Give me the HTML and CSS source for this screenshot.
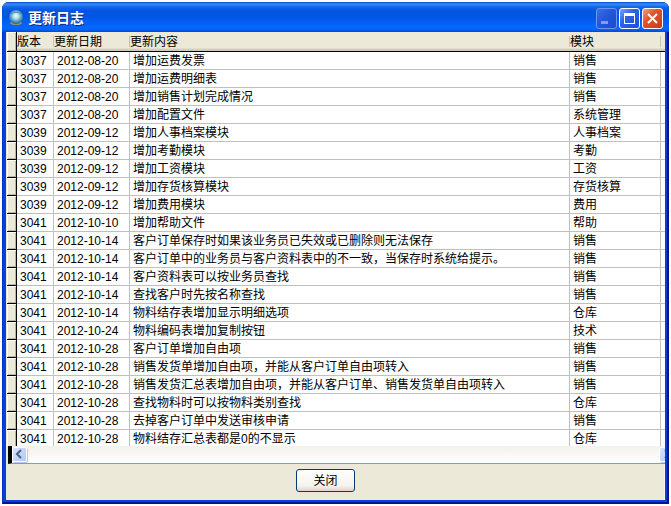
FILE: index.html
```
<!DOCTYPE html>
<html lang="zh-CN">
<head>
    <meta charset="UTF-8">
    <meta name="viewport" content="width=device-width, initial-scale=1.0">
    <title>更新日志</title>
    <link rel="stylesheet" href="styles.css">
</head>
<body>
    <div class="window">
        <div class="titlebar">
            <svg class="app-icon" width="16" height="16" viewBox="0 0 16 16">
                <defs>
                    <radialGradient id="globe" cx="50%" cy="42%" r="58%">
                        <stop offset="0" stop-color="#f4ffff"/>
                        <stop offset="0.35" stop-color="#a8dcec"/>
                        <stop offset="0.75" stop-color="#4a90b4"/>
                        <stop offset="1" stop-color="#1c5f90"/>
                    </radialGradient>
                </defs>
                <ellipse cx="8" cy="13" rx="6" ry="2" fill="#8a9478"/>
                <circle cx="8" cy="7" r="7" fill="url(#globe)"/>
                <path d="M3 4Q8 0 13 4" fill="none" stroke="#4c8ca8" stroke-width="1"/>
            </svg>
            <h1>更新日志</h1>
            <div class="window-buttons">
                <button class="win-btn minimize" aria-label="最小化" disabled>
                    <svg width="19" height="19" viewBox="0 0 19 19"><rect x="4" y="12" width="7" height="3" fill="#7d9df0"/></svg>
                </button>
                <button class="win-btn" aria-label="最大化">
                    <svg width="19" height="19" viewBox="0 0 19 19"><path d="M4 4h11v11H4zM5 7v7h9V7z" fill="#fff" fill-rule="evenodd"/></svg>
                </button>
                <button class="win-btn close" aria-label="关闭窗口">
                    <svg width="19" height="19" viewBox="0 0 19 19"><path d="M5 5l9 9M14 5l-9 9" stroke="#fff" stroke-width="2"/></svg>
                </button>
            </div>
        </div>

        <div class="client">
            <div class="grid-view">
                <table>
                    <colgroup>
                        <col class="col-mark">
                        <col class="col-version">
                        <col class="col-date">
                        <col>
                        <col class="col-module">
                        <col class="col-rest">
                    </colgroup>
                    <thead>
                        <tr><th class="mark"></th><th>版本</th><th>更新日期</th><th>更新内容</th><th>模块</th><th></th></tr>
                    </thead>
                    <tbody>
                        <tr><td class="mark"></td><td>3037</td><td>2012-08-20</td><td>增加运费发票</td><td>销售</td><td></td></tr>
                        <tr><td class="mark"></td><td>3037</td><td>2012-08-20</td><td>增加运费明细表</td><td>销售</td><td></td></tr>
                        <tr><td class="mark"></td><td>3037</td><td>2012-08-20</td><td>增加销售计划完成情况</td><td>销售</td><td></td></tr>
                        <tr><td class="mark"></td><td>3037</td><td>2012-08-20</td><td>增加配置文件</td><td>系统管理</td><td></td></tr>
                        <tr><td class="mark"></td><td>3039</td><td>2012-09-12</td><td>增加人事档案模块</td><td>人事档案</td><td></td></tr>
                        <tr><td class="mark"></td><td>3039</td><td>2012-09-12</td><td>增加考勤模块</td><td>考勤</td><td></td></tr>
                        <tr><td class="mark"></td><td>3039</td><td>2012-09-12</td><td>增加工资模块</td><td>工资</td><td></td></tr>
                        <tr><td class="mark"></td><td>3039</td><td>2012-09-12</td><td>增加存货核算模块</td><td>存货核算</td><td></td></tr>
                        <tr><td class="mark"></td><td>3039</td><td>2012-09-12</td><td>增加费用模块</td><td>费用</td><td></td></tr>
                        <tr><td class="mark"></td><td>3041</td><td>2012-10-10</td><td>增加帮助文件</td><td>帮助</td><td></td></tr>
                        <tr><td class="mark"></td><td>3041</td><td>2012-10-14</td><td>客户订单保存时如果该业务员已失效或已删除则无法保存</td><td>销售</td><td></td></tr>
                        <tr><td class="mark"></td><td>3041</td><td>2012-10-14</td><td>客户订单中的业务员与客户资料表中的不一致，当保存时系统给提示。</td><td>销售</td><td></td></tr>
                        <tr><td class="mark"></td><td>3041</td><td>2012-10-14</td><td>客户资料表可以按业务员查找</td><td>销售</td><td></td></tr>
                        <tr><td class="mark"></td><td>3041</td><td>2012-10-14</td><td>查找客户时先按名称查找</td><td>销售</td><td></td></tr>
                        <tr><td class="mark"></td><td>3041</td><td>2012-10-14</td><td>物料结存表增加显示明细选项</td><td>仓库</td><td></td></tr>
                        <tr><td class="mark"></td><td>3041</td><td>2012-10-24</td><td>物料编码表增加复制按钮</td><td>技术</td><td></td></tr>
                        <tr><td class="mark"></td><td>3041</td><td>2012-10-28</td><td>客户订单增加自由项</td><td>销售</td><td></td></tr>
                        <tr><td class="mark"></td><td>3041</td><td>2012-10-28</td><td>销售发货单增加自由项，并能从客户订单自由项转入</td><td>销售</td><td></td></tr>
                        <tr><td class="mark"></td><td>3041</td><td>2012-10-28</td><td>销售发货汇总表增加自由项，并能从客户订单、销售发货单自由项转入</td><td>销售</td><td></td></tr>
                        <tr><td class="mark"></td><td>3041</td><td>2012-10-28</td><td>查找物料时可以按物料类别查找</td><td>仓库</td><td></td></tr>
                        <tr><td class="mark"></td><td>3041</td><td>2012-10-28</td><td>去掉客户订单中发送审核申请</td><td>销售</td><td></td></tr>
                        <tr><td class="mark"></td><td>3041</td><td>2012-10-28</td><td>物料结存汇总表都是0的不显示</td><td>仓库</td><td></td></tr>
                    </tbody>
                </table>
            </div>

            <div class="scrollbar">
                <button class="scroll-btn" aria-label="向左滚动">
                    <svg width="13" height="13" viewBox="0 0 13 13"><path d="M8 2L4 6l4 4" fill="none" stroke="#4d6185" stroke-width="2"/></svg>
                </button>
                <button class="scroll-btn" aria-label="向右滚动">
                    <svg width="13" height="13" viewBox="0 0 13 13"><path d="M5 2l4 4-4 4" fill="none" stroke="#4d6185" stroke-width="2"/></svg>
                </button>
            </div>

            <div class="footer">
                <button class="close-btn">关闭</button>
            </div>
        </div>
    </div>
</body>
</html>
```
FILE: styles.css
```
* { margin: 0; padding: 0; box-sizing: border-box; }
body { height: 100vh; padding: 2px; background: #fff; font-family: "Liberation Sans", "Noto Sans CJK SC", sans-serif; font-size: 12px; color: #000; }
button { font: inherit; color: inherit; }
svg { display: block; }

.window { display: flex; flex-direction: column; height: 100%; border-radius: 7px 7px 0 0; overflow: hidden; background: #0a3fd8; padding: 0 4px 4px; box-shadow: inset 1px 0 #0831c0, inset -2px -2px #00148c; }

.titlebar { display: flex; align-items: center; flex: none; height: 30px; margin: 0 -4px; padding: 2px 6px 0 6px; background: linear-gradient(#0846c8 0, #3a8cf8 2px, #1464ec 5px, #0255e0 9px, #0256e6 16px, #0466fc 24px, #0466fc 27px, #0348c8 30px); }
.titlebar h1 { margin-left: 4px; font-size: 14px; line-height: 20px; font-weight: bold; color: #fff; text-shadow: 1px 1px #0a2a80; }
.window-buttons { display: flex; gap: 2px; margin-left: auto; }
.win-btn { width: 21px; height: 21px; border: 1px solid #fff; border-radius: 3px; background: linear-gradient(135deg, #7fa5f8, #2a62e8 40%, #1c50d8); }
.win-btn.minimize { border-color: #6d94ee; background: linear-gradient(135deg, #3c6ee4, #2255d8 50%, #1c4ccc); }
.win-btn.close { background: linear-gradient(135deg, #f0a088, #e0532c 40%, #c83c14); }

.client { display: flex; flex-direction: column; flex: 1; min-height: 0; padding-left: 1px; background: #ece9d8; }

.grid-view { flex: 1; min-height: 0; overflow: hidden; background: #fff; }
table { width: 100%; table-layout: fixed; border-collapse: separate; border-spacing: 0; }
.col-mark { width: 10px; }
.col-version { width: 37px; }
.col-date { width: 76px; }
.col-module { width: 91px; }
.col-rest { width: 4px; }
th { height: 20px; border-bottom: 1px solid #000; background: linear-gradient(#c8c4b4, #c8c4b4) right 4px / 1px 11px no-repeat, linear-gradient(#ece9d8 0, #ece9d8 16px, #d6d2c2 17px, #cbc7b8 19px); font-weight: normal; line-height: 18px; text-align: left; white-space: nowrap; }
th:last-child { background: linear-gradient(#ece9d8 0, #ece9d8 16px, #d6d2c2 17px, #cbc7b8 19px); }
td { height: 18px; padding: 2px 0 0 3px; border-right: 1px solid #c0c0c0; border-bottom: 1px solid #c0c0c0; line-height: 15px; white-space: nowrap; }
td:last-child { padding: 0; border-right: 0; }
.mark { padding: 0; border-right: 1px solid #000; border-bottom: 1px solid #000; background: #ece9d8; box-shadow: inset 1px 1px #fff, inset -1px -1px #b8b4a4; }

.scrollbar { display: flex; justify-content: space-between; flex: none; height: 18px; padding-top: 1px; border-left: 4px solid #000; border-bottom: 1px solid #7f9db9; margin-left: 1px; background: linear-gradient(#f3f1ec, #fefefb); overflow: hidden; }
.scroll-btn { flex: none; width: 15px; height: 15px; border: 1px solid #fff; border-radius: 2px; background: linear-gradient(135deg, #d6e2fe, #b4c8f6); box-shadow: 1px 1px #b8c8e8; }
.scroll-btn:last-child { margin-right: -9px; }

.footer { flex: none; padding: 5px 20px 8px 0; border-right: 1px solid #f8f6ec; }
.close-btn { display: block; width: 59px; height: 23px; margin: 0 auto; border: 1px solid #003c74; border-radius: 3px; background: linear-gradient(#fff, #f4f3ee 75%, #dcd6cc); line-height: 20px; }
```
